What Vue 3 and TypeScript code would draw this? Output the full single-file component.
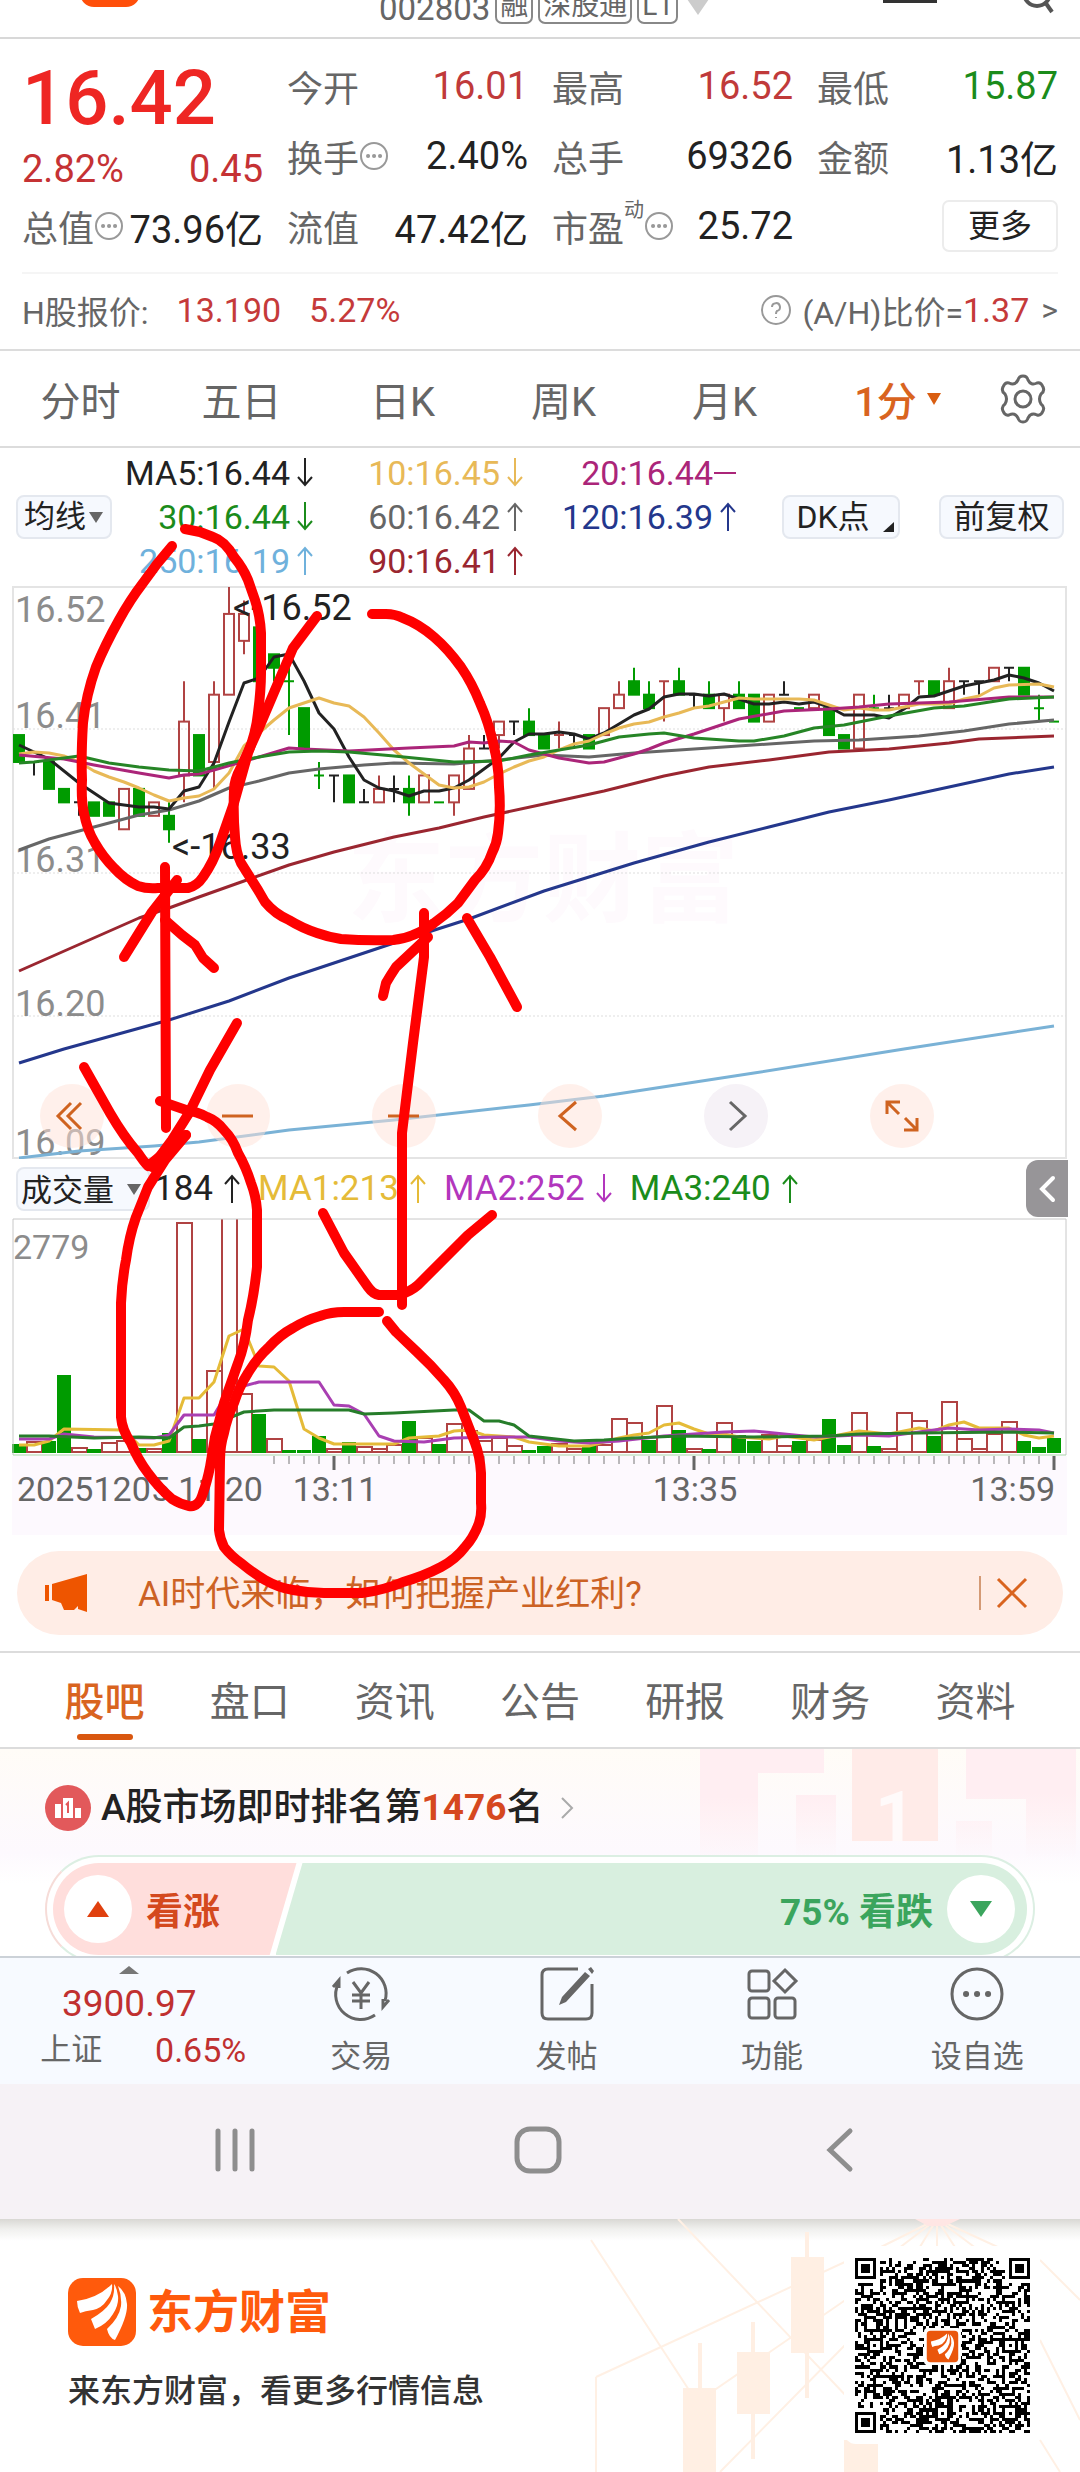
<script setup lang="ts">
type Tone = 'r' | 'g' | 'k'
// candle: tone, body top, body bottom, high, low (in price steps of 0.01 below 16.52)
type Candle = [Tone, number, number, number, number]

const STEP = 15
const LEVEL = 13.46
const cx = (i: number) => 7 + STEP * i
const cy = (level: number) => level * LEVEL + 1

const candles: Candle[] = [
  ['g', 11, 13, 11, 13], ['k', 13, 13, 13, 14], ['g', 13, 15, 13, 15], ['g', 15, 16, 15, 16], ['k', 16, 16, 16, 17],
  ['g', 16, 17, 16, 17], ['g', 16, 17, 16, 17], ['r', 15, 18, 15, 18], ['g', 15, 17, 15, 17], ['r', 16, 17, 16, 17],
  ['g', 17, 18, 16, 19], ['r', 10, 14, 7, 16], ['g', 11, 14, 11, 14], ['r', 8, 13, 7, 15], ['r', 2, 8, 0, 8],
  ['r', 2, 4, 1, 5], ['g', 3, 7, 3, 7], ['g', 5, 6, 5, 7], ['g', 7, 7, 5, 11], ['g', 9, 12, 9, 12],
  ['g', 14, 14, 13, 15], ['k', 14, 14, 14, 16], ['g', 14, 16, 14, 16], ['k', 16, 16, 15, 16], ['r', 15, 16, 14, 16],
  ['k', 15, 15, 14, 16], ['g', 15, 16, 14, 17], ['r', 14, 16, 14, 16], ['g', 16, 16, 16, 16], ['r', 14, 16, 14, 17],
  ['r', 12, 15, 11, 15], ['k', 12, 12, 11, 12], ['r', 10, 11, 10, 12], ['k', 10, 10, 10, 11], ['g', 10, 11, 9, 11],
  ['g', 11, 12, 11, 12], ['r', 11, 11, 10, 12], ['k', 11, 11, 11, 12], ['g', 11, 12, 11, 12], ['r', 9, 11, 9, 11],
  ['r', 8, 9, 7, 9], ['g', 7, 8, 6, 8], ['g', 8, 9, 7, 9], ['r', 7, 7, 7, 10], ['g', 7, 8, 6, 8],
  ['k', 8, 8, 8, 9], ['g', 8, 9, 7, 9], ['r', 8, 9, 8, 10], ['g', 8, 9, 7, 9], ['g', 8, 10, 8, 10],
  ['r', 8, 10, 8, 10], ['k', 8, 8, 7, 8], ['g', 9, 9, 9, 9], ['r', 8, 9, 8, 9], ['g', 9, 11, 9, 11],
  ['g', 11, 12, 11, 12], ['r', 8, 12, 8, 12], ['g', 9, 9, 8, 9], ['k', 9, 9, 8, 9], ['r', 8, 9, 8, 9],
  ['r', 7, 7, 7, 8], ['g', 7, 8, 7, 8], ['r', 7, 9, 6, 9], ['k', 7, 7, 7, 8], ['k', 7, 7, 7, 8],
  ['r', 6, 7, 6, 7], ['k', 6, 6, 6, 7], ['g', 6, 8, 6, 8], ['g', 9, 9, 8, 10], ['g', 10, 10, 10, 10],
]

const volumes = [
  9, 12, 12, 78, 6, 4, 11, 13, 5, 5, 20, 231, 14, 83, 240, 60, 39, 15, 3, 3, 17, 5, 11, 7, 5, 9, 32, 16, 9, 30, 23, 13, 16, 8, 3,
  7, 10, 5, 8, 9, 35, 31, 13, 48, 23, 5, 4, 31, 18, 12, 19, 8, 12, 14, 34, 8, 41, 7, 5, 41, 33, 17, 52, 15, 5, 20, 32, 12, 6, 15,
]
const volumeTones = 'grggrgrrgrgrgrrrgrgggrgrrrgrgrrrrrggrrgrrrgrgrgrggrrgrggrgrrrgrrrrrggg'

const tones: Record<Tone, string> = { r: '#b04343', g: '#009b00', k: '#222222' }

// flat [candle index, y] pairs
const averages: { color: string; data: number[] }[] = [
  { color: '#7ab2d6', data: [0, 572, 4, 565, 9, 560, 12, 556, 18, 544, 25, 534, 34, 519, 39, 510, 49, 487, 59, 463, 69, 440] },
  { color: '#24378c', data: [0, 477, 3, 463, 10, 434, 14, 415, 18, 392, 21, 377, 25, 357, 30, 333, 35, 305, 41, 277, 46, 256, 50, 241, 54, 226, 58, 214, 62, 201, 66, 188, 69, 181] },
  { color: '#9a2630', data: [0, 385, 8, 332, 10, 322, 12, 311, 15, 295, 18, 279, 21, 266, 25, 251, 28, 242, 31, 231, 35, 218, 39, 205, 43, 190, 46, 181, 50, 174, 54, 166, 58, 163, 62, 157, 64, 153, 69, 150] },
  { color: '#666666', data: [0, 264, 2, 253, 5, 241, 8, 229, 10, 224, 12, 215, 14, 202, 16, 195, 18, 187, 20, 183, 23, 179, 25, 177, 29, 178, 32, 174, 35, 169, 38, 171, 41, 167, 46, 162, 50, 158, 53, 155, 56, 154, 60, 150, 63, 145, 66, 138, 69, 134] },
  { color: '#222222', data: [0, 159, 2, 173, 4, 197, 6, 217, 8, 221, 9, 221, 10, 223, 11, 205, 12, 201, 13, 177, 14, 136, 15, 97, 16, 92, 17, 71, 18, 68, 19, 95, 20, 127, 21, 143, 22, 171, 23, 194, 24, 202, 25, 205, 26, 210, 27, 205, 28, 205, 29, 202, 30, 194, 31, 183, 32, 172, 33, 156, 34, 148, 35, 148, 36, 146, 37, 148, 38, 153, 39, 147, 40, 138, 41, 129, 42, 123, 43, 111, 44, 108, 45, 108, 46, 110, 47, 108, 48, 113, 49, 118, 50, 118, 51, 116, 52, 118, 53, 116, 54, 121, 55, 129, 57, 129, 58, 132, 59, 123, 60, 111, 61, 110, 62, 105, 63, 100, 64, 97, 65, 94, 66, 89, 67, 92, 68, 97, 69, 105] },
  { color: '#e8b957', data: [0, 168, 1, 166, 2, 167, 3, 170, 4, 176, 5, 185, 6, 191, 7, 196, 8, 202, 9, 209, 10, 215, 11, 212, 12, 210, 13, 203, 14, 187, 15, 160, 16, 147, 17, 134, 18, 122, 19, 117, 20, 112, 21, 117, 22, 120, 23, 131, 24, 147, 25, 164, 26, 177, 27, 188, 28, 199, 29, 202, 30, 201, 31, 196, 32, 188, 33, 181, 34, 175, 35, 171, 36, 164, 37, 158, 38, 155, 39, 148, 40, 142, 41, 138, 42, 136, 43, 131, 44, 127, 45, 122, 46, 120, 47, 116, 48, 112, 49, 113, 52, 113, 53, 114, 54, 119, 55, 124, 56, 122, 57, 124, 58, 124, 59, 121, 60, 118, 62, 118, 63, 113, 64, 110, 65, 102, 66, 99, 68, 98, 69, 101] },
  { color: '#ab2579', data: [0, 169, 3, 173, 5, 179, 8, 187, 10, 192, 11, 189, 12, 188, 13, 184, 16, 171, 18, 162, 19, 163, 22, 165, 26, 162, 29, 160, 30, 156, 31, 157, 32, 155, 33, 156, 34, 164, 36, 172, 38, 177, 39, 176, 40, 172, 41, 168, 42, 163, 43, 157, 45, 148, 48, 133, 51, 125, 54, 123, 56, 121, 58, 118, 62, 116, 66, 111, 69, 111] },
  { color: '#268526', data: [0, 177, 1, 176, 4, 170, 6, 177, 8, 181, 10, 184, 12, 185, 14, 177, 16, 171, 18, 166, 20, 165, 22, 166, 25, 170, 29, 176, 32, 175, 34, 169, 36, 164, 38, 159, 40, 151, 42, 148, 43, 147, 45, 152, 48, 155, 49, 155, 51, 150, 53, 142, 55, 139, 58, 130, 61, 122, 63, 120, 66, 113, 69, 111] },
]

const volumeAverages: { color: string; data: number[] }[] = [
  { color: '#e5bb38', data: [0, 227, 1, 227, 2, 223, 3, 211, 7, 212, 8, 227, 9, 227, 10, 223, 11, 180, 12, 180, 13, 164, 14, 118, 15, 111, 16, 148, 17, 149, 18, 163, 19, 211, 20, 220, 21, 226, 25, 226, 26, 220, 28, 218, 29, 213, 30, 212, 31, 217, 33, 219, 34, 224, 36, 228, 38, 228, 39, 224, 40, 220, 41, 217, 42, 215, 43, 207, 44, 205, 45, 211, 46, 216, 47, 216, 48, 219, 50, 221, 51, 218, 53, 222, 54, 219, 56, 213, 58, 216, 60, 210, 61, 213, 62, 207, 63, 204, 64, 210, 66, 210, 67, 217, 68, 220, 69, 218] },
  { color: '#a93fb2', data: [0, 221, 2, 221, 3, 216, 5, 219, 9, 220, 10, 217, 11, 197, 13, 197, 14, 172, 16, 164, 20, 164, 21, 187, 22, 188, 23, 196, 24, 218, 25, 223, 27, 224, 29, 220, 32, 219, 34, 219, 36, 223, 38, 225, 40, 223, 43, 218, 47, 214, 49, 213, 53, 219, 56, 217, 58, 218, 60, 214, 62, 210, 64, 212, 66, 211, 68, 212, 69, 215] },
  { color: '#267d2a', data: [0, 218, 2, 218, 5, 220, 8, 219, 10, 220, 11, 209, 12, 208, 13, 206, 14, 200, 15, 194, 17, 192, 22, 192, 23, 196, 25, 195, 29, 192, 30, 192, 31, 203, 32, 203, 33, 207, 34, 218, 37, 223, 39, 222, 41, 220, 44, 218, 49, 219, 54, 218, 56, 216, 60, 215, 66, 214, 69, 215] },
]

function toPoints(data: number[]): string {
  const out: string[] = []
  for (let k = 0; k < data.length; k += 2) out.push(`${cx(data[k])},${data[k + 1]}`)
  return out.join(' ')
}

const ticks = Array.from({ length: 53 }, (_, k) => k + 17)
const majorTicks = [21, 45, 69]

const legend = [
  { text: 'MA5:16.44', dir: 'down', color: '#222222' },
  { text: '10:16.45', dir: 'down', color: '#e8b957' },
  { text: '20:16.44', dir: 'flat', color: '#ab2579' },
  { text: '30:16.44', dir: 'down', color: '#1b8c1b' },
  { text: '60:16.42', dir: 'up', color: '#666666' },
  { text: '120:16.39', dir: 'up', color: '#24378c' },
  { text: '250:16.19', dir: 'up', color: '#6fb1dc' },
  { text: '90:16.41', dir: 'up', color: '#9a2630' },
]
const volumeLegend = [
  { text: '184', dir: 'up', color: '#222222' },
  { text: 'MA1:213', dir: 'up', color: '#e5bb38' },
  { text: 'MA2:252', dir: 'down', color: '#b236bd' },
  { text: 'MA3:240', dir: 'up', color: '#1b8c1b' },
]
const arrows: Record<string, string> = {
  up: 'M8 30V3M1 11L8 3L15 11',
  down: 'M8 1V28M1 20L8 28L15 20',
  flat: 'M-6 16H16',
}

const controls = [
  { label: '最左', path: 'M31 19L18 32L31 45M41 19L28 32L41 45' },
  { label: '缩小', path: 'M16 32H47' },
  { label: '放大', path: 'M16 32H47' },
  { label: '向左', path: 'M38 18L22 32L38 46' },
  { label: '向右', path: 'M26 18L41 32L26 46', gray: true },
  { label: '全屏', path: 'M17 30V18H30M18 19L29 30M47 34V46H34M46 45L35 34' },
]

const periods = ['分时', '五日', '日K', '周K', '月K']
const sections = ['股吧', '盘口', '资讯', '公告', '研报', '财务', '资料']

const swoosh =
  'M9 23Q30 20 44 6Q45 15 39 22Q34 30 25 32Q17 33 12 35Q9 29 9 23Z' +
  'M46 6Q47 17 42 25Q37 33 23 41L27 51Q39 46 45 36Q51 27 50 18Q49 10 46 6Z' +
  'M50 8Q58 14 59 26Q60 38 47 62Q41 60 39 51Q51 40 53 28Q54 18 50 8Z'

// decorative code matrix with finder and alignment squares
const QR = 57
function ring(x: number, y: number, px: number, py: number, r: number): number {
  const d = Math.max(Math.abs(x - px), Math.abs(y - py))
  if (d > r + 1) return -1
  if (r === 3) return d === 4 || d === 2 ? 0 : 1
  if (d > r) return -1
  return d === 1 ? 0 : 1
}
function qrPath(): string {
  let seed = 20251
  let d = ''
  for (let y = 0; y < QR; y++) {
    for (let x = 0; x < QR; x++) {
      seed = (seed * 1103515245 + 12345) % 2147483648
      let on = ((seed >> 16) & 1) === 1 ? 1 : 0
      for (const [px, py] of [[3, 3], [53, 3], [3, 53]]) {
        const v = ring(x, y, px, py, 3)
        if (v >= 0) on = v
      }
      for (const [px, py] of [[28, 6], [6, 28], [50, 28], [28, 50], [50, 50]]) {
        const v = ring(x, y, px, py, 2)
        if (v >= 0) on = v
      }
      if (on) d += `M${x} ${y}h1v1h-1z`
    }
  }
  return d
}
const qr = qrPath()

const strokes = [
  'M172 546Q156 564 143 583Q130 600 119 620Q105 645 96 667Q86 695 83 723Q81 755 82 780Q81 800 84 813Q87 830 95 843Q103 857 114 868Q125 880 138 886Q147 889 158 888H188Q197 886 203 877Q213 863 220 843L234 803L248 753Q256 733 258 713Q261 690 261 673V633Q260 615 255 600L248 580Q243 568 234 557Q225 541 213 537L200 532L185 529',
  'M317 616L293 648L275 690L258 730L241 767Q234 780 234 790Q233 815 235 837Q236 853 241 863L258 890Q262 897 265 902Q275 914 289 920Q302 928 317 933Q328 937 341 939Q367 941 393 940Q404 939 413 935Q424 931 434 923Q447 914 458 903L475 880Q487 868 492 853Q497 843 498 833Q501 810 499 787Q499 767 494 747Q489 723 480 703Q472 683 461 667Q448 649 434 637Q419 624 403 618Q395 614 386 614H372',
  'M165 867L166 1128',
  'M177 880L152 912L124 957',
  'M165 920L182 935L195 945L203 958L214 968',
  'M84 1067L110 1113Q124 1137 138 1153Q144 1162 148 1166L186 1135',
  'M237 1023L210 1070L189 1113L172 1140L152 1167',
  'M160 1101L186 1110Q198 1112 207 1117Q217 1121 224 1130Q233 1139 238 1153Q246 1167 251 1183Q256 1196 257 1210V1267Q254 1296 248 1320Q245 1345 238 1363L224 1403L215 1437L210 1467Q207 1482 203 1493Q201 1500 198 1503Q194 1507 189 1506Q180 1504 172 1499Q159 1488 148 1473Q138 1460 131 1443Q122 1430 121 1417V1303Q122 1280 126 1260Q129 1237 136 1217L148 1187L165 1160L186 1135',
  'M379 1312H344Q331 1312 320 1316Q306 1320 293 1328Q280 1335 269 1347Q257 1358 248 1373Q239 1387 234 1403Q227 1418 224 1433Q220 1446 220 1460L219 1530Q220 1539 224 1547Q231 1556 241 1563Q253 1573 265 1580Q279 1588 293 1590Q309 1593 324 1593H362Q385 1590 403 1582Q424 1576 441 1567Q456 1559 465 1547Q474 1537 479 1523Q482 1514 481 1503V1473Q480 1456 475 1443L461 1407Q455 1392 444 1380Q431 1365 417 1352L396 1332L387 1321',
  'M424 913V957L413 1043L402 1133V1305',
  'M428 937L396 967Q390 976 386 983L383 996',
  'M467 918L490 957L517 1007',
  'M323 1213L344 1253L368 1287Q373 1294 379 1295H399Q410 1292 418 1285L468 1235L492 1215',
]
</script>

<template>
  <main class="page">
    <header class="top">
      <div class="mini-logo"></div>
      <div class="code">
        <span>002803</span><i>融</i><i>深股通</i><i>L1</i><b></b>
      </div>
      <div class="bar"></div>
      <svg class="lens" width="44" height="20" viewBox="0 0 44 20" aria-hidden="true">
        <circle cx="20" cy="-7" r="13" /><path d="M28 2L35 12" />
      </svg>
    </header>

    <section class="quote">
      <div class="grid">
        <div class="price">
          <strong>16.42</strong>
          <p><span>2.82%</span><span>0.45</span></p>
        </div>
        <div class="cell"><span>今开</span><em class="red">16.01</em></div>
        <div class="cell"><span>最高</span><em class="red">16.52</em></div>
        <div class="cell"><span>最低</span><em class="green">15.87</em></div>
        <div class="cell"><span>换手<svg class="dots" viewBox="0 0 30 30"><circle cx="15" cy="15" r="13" /><path d="M9 15h.1M15 15h.1M21 15h.1" /></svg></span><em>2.40%</em></div>
        <div class="cell"><span>总手</span><em>69326</em></div>
        <div class="cell"><span>金额</span><em>1.13亿</em></div>
        <div class="cell"><span>总值<svg class="dots" viewBox="0 0 30 30"><circle cx="15" cy="15" r="13" /><path d="M9 15h.1M15 15h.1M21 15h.1" /></svg></span><em>73.96亿</em></div>
        <div class="cell"><span>流值</span><em>47.42亿</em></div>
        <div class="cell"><span>市盈<sup>动</sup><svg class="dots" viewBox="0 0 30 30"><circle cx="15" cy="15" r="13" /><path d="M9 15h.1M15 15h.1M21 15h.1" /></svg></span><em>25.72</em></div>
        <div class="cell end"><button class="more" type="button">更多</button></div>
      </div>
      <div class="hrow">
        <span>H股报价:</span><em>13.190</em><em>5.27%</em>
        <a href="#ah">
          <svg width="32" height="32" viewBox="0 0 32 32" aria-hidden="true"><circle cx="16" cy="16" r="14" /><path d="M12 13a4 4 0 1 1 5 4q-1 1-1 3M16 23v1" /></svg>
          <span>(A/H)比价=</span><em>1.37</em><span class="gt">&gt;</span>
        </a>
      </div>
    </section>

    <nav class="periods">
      <button v-for="p in periods" :key="p" type="button">{{ p }}</button>
      <button class="on" type="button">1分<i></i></button>
      <button class="gear" type="button" aria-label="设置">
        <svg width="52" height="52" viewBox="0 0 52 52">
          <path d="M21 7Q22 3 26 3Q30 3 31 7Q34 13 40 10Q44 9 46 14Q48 18 44 21Q41 26 44 31Q48 34 46 38Q44 43 40 42Q34 39 31 45Q30 49 26 49Q22 49 21 45Q18 39 12 42Q8 43 6 38Q4 34 8 31Q11 26 8 21Q4 18 6 14Q8 9 12 10Q18 13 21 7Z" />
          <circle cx="26" cy="26" r="8" />
        </svg>
      </button>
    </nav>

    <section class="charts">
      <div class="legend">
        <label class="pick ma"><select aria-label="指标"><option>均线</option></select></label>
        <div class="legend-grid">
          <span v-for="l in legend" :key="l.text" :style="{ color: l.color }">{{ l.text }}<svg width="16" height="32" viewBox="0 0 16 32"><path :d="arrows[l.dir]" /></svg></span>
        </div>
        <button class="tool dk" type="button">DK点</button>
        <button class="tool" type="button">前复权</button>
      </div>

      <div class="kline">
        <svg viewBox="0 0 1055 573">
          <text class="watermark" x="335" y="328">东方财富</text>
          <rect class="frame" x="1" y="1" width="1053" height="571" />
          <path class="gridline" d="M1 143H1054M1 287H1054M1 430H1054" />
          <g class="price-labels">
            <text x="3" y="36">16.52</text>
            <text x="3" y="142">16.41</text>
            <text x="3" y="286">16.31</text>
            <text x="3" y="430">16.20</text>
            <text x="3" y="569">16.09</text>
          </g>
          <g v-for="(c, i) in candles" :key="i" :stroke="tones[c[0]]" stroke-width="2">
            <template v-if="c[1] === c[2]">
              <path :d="`M${cx(i) - 5} ${cy(c[1])}h10M${cx(i)} ${cy(c[3])}V${cy(c[4])}`" />
            </template>
            <template v-else>
              <path :d="`M${cx(i)} ${cy(c[3])}V${cy(c[1])}M${cx(i)} ${cy(c[2])}V${cy(c[4])}`" />
              <rect :x="cx(i) - 5" :y="cy(c[1])" width="10" :height="cy(c[2]) - cy(c[1])" :fill="c[0] === 'g' ? tones.g : 'none'" />
            </template>
          </g>
          <polyline v-for="a in averages" :key="a.color" :points="toPoints(a.data)" :stroke="a.color" class="avg" />
          <text class="mark" x="221" y="34">&lt;-16.52</text>
          <text class="mark" x="160" y="273">&lt;-16.33</text>
        </svg>
        <div class="controls">
          <button v-for="c in controls" :key="c.label" type="button" :class="{ gray: c.gray }" :aria-label="c.label">
            <svg width="64" height="64" viewBox="0 0 64 64"><path :d="c.path" /></svg>
          </button>
        </div>
      </div>

      <div class="vol-head">
        <label class="pick vol"><select aria-label="副图指标"><option>成交量</option></select></label>
        <span v-for="l in volumeLegend" :key="l.text" :style="{ color: l.color }">{{ l.text }}<svg width="16" height="32" viewBox="0 0 16 32"><path :d="arrows[l.dir]" /></svg></span>
        <button class="fold" type="button" aria-label="展开">
          <svg width="42" height="56" viewBox="0 0 42 56"><path d="M27 17L16 28L27 39" /></svg>
        </button>
      </div>

      <div class="volume">
        <svg viewBox="0 0 1055 317">
          <rect x="0" y="238" width="1055" height="79" fill="#fdf9fe" />
          <clipPath id="vol-clip"><rect x="0" y="1" width="1055" height="236" /></clipPath>
          <g clip-path="url(#vol-clip)">
            <template v-for="(v, i) in volumes" :key="i">
              <rect v-if="volumeTones[i] === 'g'" :x="cx(i) - 7" :y="235 - v" width="14" :height="v" fill="#009b00" />
              <rect v-else :x="cx(i) - 7" :y="236 - v" width="15" :height="v - 2" fill="#ffffff" stroke="#b04343" stroke-width="2" />
            </template>
            <polyline v-for="a in volumeAverages" :key="a.color" :points="toPoints(a.data)" :stroke="a.color" class="avg" />
          </g>
          <path class="vol-frame" d="M1 237V1H1054V237" />
          <path d="M1 237H1054" stroke="#a9d3a9" stroke-width="1" />
          <path v-for="t in ticks" :key="t" :d="`M${cx(t)} 238v8`" stroke="#777777" stroke-width="1" />
          <path v-for="t in majorTicks" :key="'m' + t" :d="`M${cx(t)} 238v14`" stroke="#666666" stroke-width="3" />
          <text class="vmax" x="1" y="41">2779</text>
          <g class="times">
            <text x="5" y="283">20251205 11:20</text>
            <text x="323" y="283" text-anchor="middle">13:11</text>
            <text x="683" y="283" text-anchor="middle">13:35</text>
            <text x="1043" y="283" text-anchor="end">13:59</text>
          </g>
        </svg>
      </div>

      <svg class="ink" viewBox="0 448 1080 1152" aria-hidden="true">
        <path v-for="s in strokes" :key="s" :d="s" />
      </svg>
    </section>

    <aside class="banner">
      <svg width="44" height="40" viewBox="0 0 44 40" aria-hidden="true"><path d="M1 12h4v16H1zM8 11L43 1V39L34 36V33L30 37H20L17 30L8 27Z" /></svg>
      <a href="#ai">AI时代来临，如何把握产业红利?</a>
      <button type="button" aria-label="关闭"><svg width="32" height="32" viewBox="0 0 32 32"><path d="M2 2L30 30M30 2L2 30" /></svg></button>
    </aside>

    <nav class="sections">
      <a v-for="(s, i) in sections" :key="s" :href="'#s' + i" :class="{ on: i === 0 }">{{ s }}</a>
    </nav>

    <section class="rank">
      <svg class="podium" width="380" height="120" viewBox="0 0 380 120" aria-hidden="true">
        <defs>
          <linearGradient id="fade" x1="0" y1="0" x2="0" y2="1">
            <stop offset="0.4" stop-color="#ffeef2" /><stop offset="1" stop-color="#ffeef2" stop-opacity="0" />
          </linearGradient>
        </defs>
        <path fill="url(#fade)" d="M0 0H124V24H58V120H-4Z" />
        <path fill="#ffebe8" d="M152 0H238V92H152Z" />
        <path fill="url(#fade)" d="M96 46H136V110H96ZM266 0H376V110H326V50H266ZM256 72H292V110H256Z" />
        <text x="175" y="92">1</text>
      </svg>
      <a class="rank-line" href="#rank">
        <svg width="46" height="46" viewBox="0 0 46 46" aria-hidden="true">
          <circle cx="23" cy="23" r="23" fill="#e2595b" />
          <path fill="#ffffff" d="M10 19h6v14h-6zM18 13h10v20h-10zM30 23h6v10h-6z" />
          <path stroke="#e2595b" stroke-width="2" fill="none" d="M21 20l2-2v10" />
        </svg>
        <span>A股市场即时排名第<b>1476</b>名</span>
        <svg class="chev" width="16" height="26" viewBox="0 0 16 26"><path d="M3 3L13 13L3 23" /></svg>
      </a>
      <div class="vote">
        <div class="vote-in">
          <button class="up" type="button"><i><svg width="24" height="18" viewBox="0 0 24 18"><path d="M12 1L23 17H1Z" /></svg></i>看涨</button>
          <button class="down" type="button">75% 看跌<i><svg width="24" height="18" viewBox="0 0 24 18"><path d="M12 17L23 1H1Z" /></svg></i></button>
        </div>
      </div>
    </section>

    <nav class="dock">
      <a class="index" href="#sh"><i></i><strong>3900.97</strong><span>上证<em>0.65%</em></span></a>
      <a href="#trade">
        <svg viewBox="0 0 60 56"><path d="M16 7A25 25 0 0 1 54 35M44 49A25 25 0 0 1 7 18M2 21L8 14V22M58 34L52 41V33" /><path d="M22 16L30 27L38 16M30 27V43M21 29H39M21 35H39" /></svg>
        交易</a>
      <a href="#post">
        <svg viewBox="0 0 60 56"><path d="M41 3H11Q5 3 5 9V47Q5 53 11 53H49Q55 53 55 47V18" /><path class="fill" d="M48 6L53 10L29 36L22 39L25 31ZM51 3L54 1L57 5L55 8Z" /></svg>
        发帖</a>
      <a href="#more">
        <svg viewBox="0 0 60 56"><rect x="7" y="5" width="20" height="20" rx="3" /><rect x="7" y="32" width="20" height="20" rx="3" /><rect x="33" y="32" width="20" height="20" rx="3" /><path d="M43 4L54 15L43 26L32 15Z" /></svg>
        功能</a>
      <a href="#fav">
        <svg viewBox="0 0 60 56"><circle cx="30" cy="28" r="25" /><path class="pt" d="M19 28h.1M30 28h.1M41 28h.1" /></svg>
        设自选</a>
    </nav>

    <div class="system">
      <button type="button" aria-label="最近"><svg width="50" height="50" viewBox="0 0 50 50"><path d="M8 6V44M25 6V44M42 6V44" /></svg></button>
      <button type="button" aria-label="主页"><svg width="50" height="50" viewBox="0 0 50 50"><rect x="4" y="4" width="42" height="42" rx="13" /></svg></button>
      <button type="button" aria-label="返回"><svg width="50" height="50" viewBox="0 0 50 50"><path d="M35 6L15 25L35 44" /></svg></button>
    </div>

    <footer class="promo">
      <svg class="art" viewBox="580 2219 500 253" preserveAspectRatio="xMaxYMid slice" aria-hidden="true">
        <g stroke="#fff0e4" stroke-width="2" fill="none">
          <path d="M591 2240L689 2390M678 2219L850 2400M596 2377L860 2255M700 2400L860 2290M720 2472L850 2340M937 2219L865 2255M937 2219L890 2255M937 2219L915 2255M937 2219V2255M937 2219L960 2255M937 2219L985 2255M937 2219L1015 2255M1040 2260L1080 2300M1040 2340L1080 2420M596 2377V2472M1040 2440L1060 2472" />
        </g>
        <g fill="#ffefe3">
          <path d="M683 2388H716V2472H683ZM698 2343H702V2388H698ZM737 2352H770V2414H737ZM751 2322H755V2459H751ZM791 2257H824V2353H791ZM805 2232H809V2398H805ZM844 2440H878V2472H844Z" />
          <path fill="#ffe6e4" d="M915 2219H960L945 2226H928Z" />
        </g>
      </svg>
      <div class="brand">
        <div class="name">
          <svg width="68" height="68" viewBox="0 0 68 68" aria-hidden="true">
            <rect width="68" height="68" rx="15" fill="#ff5a0c" />
            <path fill="#ffffff" :d="swoosh" />
          </svg>
          <strong>东方财富</strong>
        </div>
        <p>来东方财富，看更多行情信息</p>
      </div>
      <div class="qr">
        <svg viewBox="0 0 57 57" shape-rendering="crispEdges"><path :d="qr" /></svg>
        <svg class="qr-logo" viewBox="-6 -6 80 80" aria-hidden="true">
          <rect x="-6" y="-6" width="80" height="80" rx="8" fill="#ffffff" />
          <rect width="68" height="68" rx="8" fill="#ea560c" />
          <path fill="#ffffff" :d="swoosh" />
        </svg>
      </div>
    </footer>
  </main>
</template>

<style>
body { margin: 0; background: #ffffff; }
</style>

<style scoped>
* { box-sizing: border-box; }
.page { position: relative; overflow: hidden; background: #fff; color: #222; font-family: Roboto, "Noto Sans CJK SC", sans-serif; }
button, select { margin: 0; padding: 0; border: 0; background: none; color: inherit; font: inherit; }
a { color: inherit; text-decoration: none; }
em, i { font-style: normal; }
p { margin: 0; }
svg { flex: none; fill: none; }

.top { display: flex; align-items: flex-end; justify-content: space-between; height: 39px; padding: 0 32px 0 80px; overflow: hidden; border-bottom: 2px solid #d8d8d8; }
.mini-logo { width: 60px; height: 60px; margin-bottom: 30px; border-radius: 14px; background: #ff4f0a; flex: none; }
.code { display: flex; align-items: flex-end; gap: 5px; margin: 0 174px 13px 239px; color: #666; font-size: 33px; line-height: 30px; white-space: nowrap; }
.code i { height: 40px; padding: 0 3px; border: 2px solid #888; border-radius: 7px; font-size: 28px; line-height: 40px; }
.code b { width: 0; margin: 0 0 9px 4px; border: 11px solid transparent; border-top: 16px solid #ccc; border-bottom: 0; }
.bar { width: 54px; height: 10px; margin-bottom: 34px; background: #333; flex: none; }
.lens { margin: 0 0 17px 80px; stroke: #555; stroke-width: 4; }

.quote { padding: 12px 22px 0; border-bottom: 2px solid #dcdcdc; }
.grid { display: grid; grid-template-columns: repeat(4, 1fr); grid-auto-rows: 70px; column-gap: 24px; }
.price { grid-row: span 2; color: #c53234; }
.price strong { display: block; color: #ee2623; font-size: 76px; font-weight: 500; line-height: 94px; }
.price p { display: flex; justify-content: space-between; font-size: 38px; line-height: 48px; }
.cell { display: flex; align-items: center; justify-content: space-between; font-size: 38px; white-space: nowrap; }
.cell span { display: flex; align-items: center; color: #666; font-size: 36px; }
.cell sup { align-self: flex-start; font-size: 20px; line-height: 20px; }
.dots { width: 30px; height: 30px; stroke: #999; stroke-width: 2; }
.dots path { stroke-width: 4; stroke-linecap: round; }
.red { color: #c03a3a; }
.green { color: #1b8c1b; }
.end { justify-content: flex-end; }
.more { width: 116px; height: 52px; border: 2px solid #ececec; border-radius: 7px; font-size: 32px; line-height: 48px; }
.hrow { display: flex; align-items: center; height: 77px; margin-top: 11px; padding-bottom: 3px; border-top: 2px solid #f5f5f5; color: #666; font-size: 32px; }
.hrow em { margin-left: 28px; color: #c53a3a; font-size: 34px; }
.hrow a { display: flex; align-items: center; margin-left: auto; }
.hrow a svg { margin-right: 10px; stroke: #999; stroke-width: 2; }
.hrow a em { margin: 0; }
.gt { margin-left: 12px; }

.periods { display: flex; align-items: center; height: 97px; border-bottom: 2px solid #dcdcdc; color: #666; font-size: 40px; }
.periods button { flex: 161; text-align: center; }
.periods .on { display: flex; flex: 137; align-items: center; justify-content: center; gap: 10px; padding-left: 24px; color: #d9641f; font-weight: 500; }
.periods .on i { border: 7px solid transparent; border-top: 12px solid #d95d10; border-bottom: 0; }
.periods .gear { flex: 114; height: 52px; }
.gear svg { stroke: #666; stroke-width: 3; }

.charts { position: relative; z-index: 2; }
.legend { display: flex; align-items: center; height: 138px; padding: 0 16px; }
.legend-grid { display: grid; grid-template-columns: 201px 210px 213px; grid-auto-rows: 44px; justify-items: end; margin-right: auto; font-size: 34px; }
.legend-grid span, .vol-head span { display: flex; align-items: center; gap: 7px; white-space: nowrap; }
.legend-grid svg, .vol-head span svg { overflow: visible; stroke: currentColor; stroke-width: 2; }
.pick { position: relative; height: 44px; border: 2px solid #e4e8ef; border-radius: 8px; background: #f6f9fe; flex: none; }
.pick select { width: 100%; height: 40px; padding-left: 3px; appearance: none; font-size: 31px; line-height: 40px; }
.pick::after { content: ""; position: absolute; right: 7px; top: 15px; border: 7px solid transparent; border-top: 11px solid #666; border-bottom: 0; pointer-events: none; }
.ma { width: 96px; }
.ma select { padding-left: 6px; }
.vol { width: 134px; }
.tool { position: relative; width: 125px; height: 44px; border: 2px solid #e4e8ef; border-radius: 8px; background: #f6f9fe; font-size: 32px; line-height: 40px; }
.dk { width: 118px; margin-right: 39px; padding-right: 16px; }
.dk::after { content: ""; position: absolute; right: 4px; bottom: 5px; border-left: 11px solid transparent; border-bottom: 10px solid #222; }

.kline { position: relative; margin: 0 13px 0 12px; }
.kline > svg, .volume > svg { display: block; width: 100%; height: auto; }
.frame { stroke: #e4e4e4; stroke-width: 2; }
.gridline { stroke: #dddddd; stroke-width: 1; stroke-dasharray: 2 2; }
.watermark { fill: #fefafd; font-size: 98px; font-weight: 700; }
.price-labels text { fill: #8c8c8c; font-size: 36px; }
.mark { fill: #222; font-size: 36px; }
.avg { stroke-width: 3; stroke-linejoin: round; }
.controls { position: absolute; left: 28px; bottom: 11px; display: flex; gap: 102px; }
.controls button { width: 64px; height: 64px; border-radius: 50%; background: rgba(255, 226, 216, 0.5); }
.controls svg { display: block; stroke: #cf6320; stroke-width: 3; }
.controls .gray { background: #f6f2f7; }
.controls .gray svg { stroke: #666; }

.vol-head { display: flex; align-items: center; gap: 18px; height: 59px; padding-left: 16px; font-size: 35px; }
.vol-head .pick { margin-right: -14px; }
.vol-head span { gap: 11px; }
.fold { width: 42px; height: 57px; margin: 0 12px 0 auto; border-radius: 12px 0 0 12px; background: #979598; }
.fold svg { display: block; stroke: #fff; stroke-width: 4; stroke-linecap: round; }
.volume { margin: 0 13px 0 12px; }
.vol-frame { stroke: #c8c8c8; stroke-width: 1; }
.vmax { fill: #8c8c8c; font-size: 34px; }
.times text { fill: #666; font-size: 34px; }
.ink { position: absolute; left: 0; top: 0; width: 100%; height: auto; overflow: visible; pointer-events: none; stroke: #ff0000; stroke-width: 10; stroke-linecap: round; stroke-linejoin: round; }

.banner { display: flex; align-items: center; height: 84px; margin: 16px 17px; padding: 0 35px 0 27px; border-radius: 42px; background: #ffede6; color: #cc6224; font-size: 35px; }
.banner > svg { fill: #ee5500; }
.banner a { margin: 0 auto 0 50px; padding-bottom: 5px; }
.banner button { height: 34px; padding-left: 15px; border-left: 2px solid #d49a75; }
.banner button svg { display: block; stroke: #d9641f; stroke-width: 3; }

.sections { display: flex; justify-content: space-between; height: 98px; padding: 0 32px; border-top: 2px solid #dcdcdc; border-bottom: 2px solid #dcdcdc; color: #666; font-size: 40px; line-height: 100px; }
.sections a { position: relative; width: 145px; text-align: center; }
.sections .on { color: #d9641f; font-weight: 500; }
.sections .on::after { content: ""; position: absolute; left: 50%; bottom: 7px; width: 56px; height: 6px; margin-left: -28px; border-radius: 3px; background: #d9570f; }

.rank { position: relative; height: 207px; padding: 36px 45px 0; overflow: hidden; background: linear-gradient(#fffcf7, #fdf9fe 50%, #ffffff 65%); }
.podium { position: absolute; right: 0; top: 0; }
.podium text { fill: #fffafa; font-size: 70px; font-weight: 700; }
.rank-line { position: relative; display: flex; align-items: center; height: 46px; font-size: 37px; font-weight: 500; line-height: 46px; white-space: nowrap; }
.rank-line span { margin: 0 16px 0 10px; }
.rank-line b { color: #d6481f; font-weight: 700; }
.chev { stroke: #aaa; stroke-width: 2; }
.vote { position: relative; height: 108px; margin-top: 24px; padding: 6px; border: 2px solid #dcefe3; border-left-color: #f6dcd8; border-radius: 54px; background: #fff; }
.vote-in { display: flex; height: 92px; overflow: hidden; border-radius: 46px; background: #fff; }
.vote button { display: flex; align-items: center; font-size: 37px; font-weight: 700; }
.vote i { display: flex; align-items: center; justify-content: center; width: 68px; height: 68px; border-radius: 50%; background: #fff; }
.vote .up { width: 25%; gap: 14px; padding-left: 11px; background: #ffdedc; color: #d4491e; clip-path: polygon(0 0, 100% 0, 89% 100%, 0 100%); }
.up svg { fill: #e0400e; }
.vote .down { flex: 1; justify-content: flex-end; gap: 14px; margin-left: -21px; padding-right: 12px; background: #d8efdf; color: #3ba55d; clip-path: polygon(27px 0, 100% 0, 100% 100%, 0 100%); }
.down svg { fill: #3ba55d; }

.dock { position: relative; display: flex; height: 128px; border-top: 2px solid #ccd2d8; background: #f7faff; color: #666; font-size: 31px; line-height: 40px; }
.dock a { display: flex; flex: 205; flex-direction: column; align-items: center; padding-top: 8px; }
.dock svg { width: 60px; height: 56px; margin-bottom: 15px; stroke: #666; stroke-width: 3; }
.dock .fill { fill: #666; stroke: none; }
.dock .pt { stroke-width: 6; stroke-linecap: round; }
.dock .index { flex: 258; }
.index i { border: 10px solid transparent; border-top: 0; border-bottom: 8px solid #777; }
.index strong { color: #c03030; font-size: 37px; font-weight: 400; line-height: 60px; }
.index span { display: flex; justify-content: space-between; width: 206px; margin-left: 28px; line-height: 32px; }
.index em { color: #c03030; font-size: 34px; }

.system { display: flex; justify-content: space-between; align-items: center; height: 135px; padding: 0 215px 4px 210px; background: #f6f2f6; }
.system button { height: 50px; }
.system svg { display: block; stroke: #8e8e8e; stroke-width: 5; stroke-linecap: round; }

.promo { position: relative; display: flex; justify-content: space-between; align-items: flex-start; height: 253px; padding: 27px 40px 0 68px; background: linear-gradient(#d9d8d4, #f0f0ee 10px, #ffffff 22px); }
.art { position: absolute; right: 0; top: 0; width: 500px; height: 253px; }
.brand { position: relative; padding-top: 32px; }
.name { display: flex; align-items: center; gap: 11px; color: #ff5a0c; }
.name strong { font-size: 46px; line-height: 68px; }
.brand p { margin-top: 21px; color: #333; font-size: 32px; font-weight: 500; line-height: 48px; }
.qr { position: relative; width: 196px; height: 198px; padding: 12px 10px 0 11px; border-radius: 12px; background: #fff; }
.qr > svg { display: block; width: 175px; height: 175px; fill: #000; }
.qr .qr-logo { position: absolute; left: 80px; top: 82px; width: 37px; height: 37px; }
</style>
